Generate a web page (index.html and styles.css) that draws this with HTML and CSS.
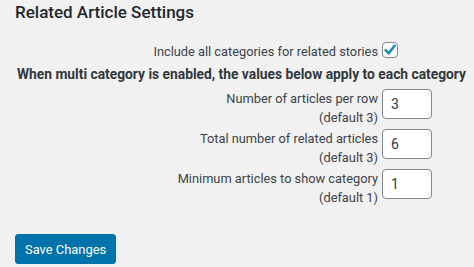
FILE: index.html
```html
<!DOCTYPE html>
<html lang="en">
<head>
    <meta charset="UTF-8">
    <meta name="viewport" content="width=device-width, initial-scale=1.0">
    <title>Related Article Settings</title>
    <link rel="stylesheet" href="styles.css">
</head>
<body>
    <h2 class="title">Related Article Settings</h2>

    <div class="settings">
        <label class="row-label" for="all_cats">Include all categories for related stories</label>
        <div class="row-field">
            <span class="check">
                <input type="checkbox" id="all_cats" name="all_cats" checked>
                <svg viewBox="0 0 16 16" width="16" height="16" aria-hidden="true">
                    <path d="M3.6 8.2 L6.6 11.4 L12.6 3.8" fill="none" stroke="#1e8cbe" stroke-width="2.6" stroke-linecap="round" stroke-linejoin="round"/>
                </svg>
            </span>
        </div>

        <div class="row-note">When multi category is enabled, the values below apply to each category</div>

        <label class="row-label" for="per_row">Number of articles per row<br>(default 3)</label>
        <div class="row-field"><input type="text" id="per_row" name="per_row" value="3"></div>

        <label class="row-label" for="total">Total number of related articles<br>(default 3)</label>
        <div class="row-field"><input type="text" id="total" name="total" value="6"></div>

        <label class="row-label" for="min_cat">Minimum articles to show category<br>(default 1)</label>
        <div class="row-field"><input type="text" id="min_cat" name="min_cat" value="1"></div>
    </div>

    <p class="submit">
        <button type="submit" class="button-primary">Save Changes</button>
    </p>
</body>
</html>
```

FILE: styles.css
```css
body {
    margin: 0;
    background: #f1f1f1;
    color: #3c434a;
    font-family: Roboto, "Open Sans", sans-serif;
    font-size: 12.8px;
}
.title {
    margin: 0;
    padding: 0 0 0 15px;
    font-size: 17px;
    font-weight: 500;
    line-height: 24px;
    color: #23282d;
}
.settings {
    display: grid;
    grid-template-columns: 1fr 86px;
    column-gap: 4px;
    width: 453px;
    margin: 18px 0 0 15px;
}
.row-label {
    text-align: right;
    line-height: 19px;
}
.row-field {
    display: flex;
    align-items: flex-start;
}
.check {
    position: relative;
    width: 16px;
    height: 16px;
}
.check input {
    appearance: none;
    margin: 0;
    width: 16px;
    height: 16px;
    border: 1px solid #7e8993;
    border-radius: 4px;
    background: #fff;
    box-sizing: border-box;
}
.check svg {
    position: absolute;
    top: 0;
    left: 0;
}
.row-note {
    grid-column: 1 / 3;
    text-align: center;
    white-space: nowrap;
    font-size: 13.8px;
    font-weight: 700;
    color: #32373c;
    margin: 5px 0 7px;
}
.row-field input[type="text"] {
    width: 50px;
    height: 30px;
    margin: 0 0 10px;
    padding: 0 8px;
    border: 1px solid #7e8993;
    border-radius: 4px;
    box-sizing: border-box;
    font-family: inherit;
    font-size: 14px;
    color: #32373c;
    background: #fff;
}
.submit {
    margin: 25px 0 0 15px;
}
.button-primary {
    height: 30px;
    padding: 0 9px;
    border: 1px solid #0073aa;
    border-radius: 3px;
    background: #0073aa;
    color: #fff;
    font-family: inherit;
    font-size: 12.9px;
    cursor: pointer;
}
```
